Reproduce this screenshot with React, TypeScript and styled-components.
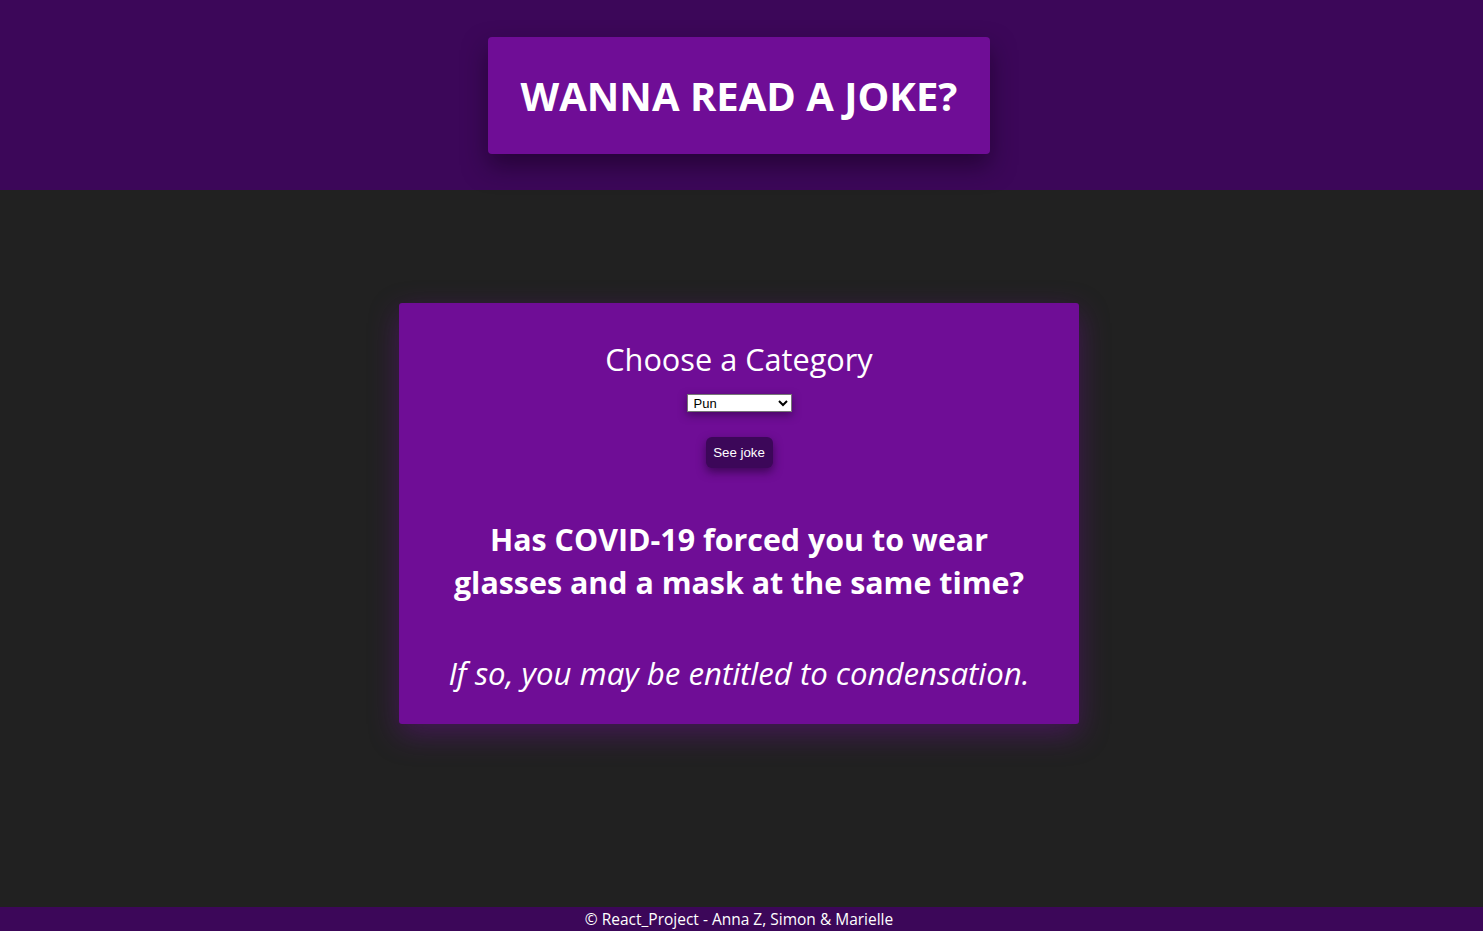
import styled, { createGlobalStyle } from "styled-components";

const GlobalStyle = createGlobalStyle`
  html, body {
    margin: 0;
    padding: 0;
    background: #212121;
    font-family: "Open Sans", "Noto Sans", sans-serif;
    color: #ffffff;
  }
`;

const Page = styled.div`
  display: flex;
  flex-direction: column;
  min-height: 931px;
`;

const Header = styled.header`
  background: #3c0759;
  height: 190px;
  display: flex;
  justify-content: center;
  align-items: flex-start;
  padding: 37px 5px 0 0;
  box-sizing: border-box;
`;

const TitleBox = styled.div`
  background: #6f0d96;
  width: 502px;
  height: 117px;
  border-radius: 4px;
  display: flex;
  align-items: center;
  justify-content: center;
  box-shadow: 0 12px 24px rgba(20, 0, 30, 0.55);
`;

const Title = styled.h1`
  margin: 0;
  font-size: 40px;
  font-weight: 700;
`;

const Main = styled.main`
  flex: 1;
  display: flex;
  justify-content: center;
  align-items: flex-start;
  padding: 113px 5px 0 0;
`;

const Card = styled.section`
  background: #6f0d96;
  width: 680px;
  height: 421px;
  box-sizing: border-box;
  border-radius: 3px;
  display: flex;
  flex-direction: column;
  align-items: center;
  padding-top: 36px;
  box-shadow: 0 10px 30px rgba(111, 13, 150, 0.45);
`;

const Heading = styled.h2`
  margin: 0;
  font-size: 30.7px;
  font-weight: 400;
  line-height: 40px;
`;

const Select = styled.select`
  margin-top: 15px;
  width: 105px;
  height: 18px;
  font-family: "Liberation Sans", Arial, sans-serif;
  font-size: 13px;
  padding: 0 2px;
  border: 1px solid #767676;
  border-radius: 0;
  background: #ffffff;
  color: #000000;
  box-shadow: 0 3px 8px rgba(30, 0, 45, 0.5);
`;

const Button = styled.button`
  margin-top: 25px;
  width: 67px;
  height: 31px;
  border: none;
  border-radius: 6px;
  background: #3c0759;
  color: #ffffff;
  font-family: "Liberation Sans", Arial, sans-serif;
  font-size: 13.3px;
  box-shadow: 0 4px 10px rgba(30, 0, 45, 0.6);
  cursor: pointer;
`;

const Question = styled.p`
  margin: 50px 0 0;
  font-size: 30.4px;
  font-weight: 700;
  line-height: 43px;
  text-align: center;
  max-width: 600px;
`;

const Answer = styled.p`
  margin: 48px 0 0;
  font-size: 31.2px;
  font-style: italic;
  text-align: center;
`;

const Footer = styled.footer`
  background: #3c0759;
  height: 24px;
  display: flex;
  align-items: center;
  justify-content: center;
  padding-right: 5px;
  font-size: 15.5px;
`;

export default function App() {
  return (
    <Page>
      <GlobalStyle />
      <Header>
        <TitleBox>
          <Title>WANNA READ A JOKE?</Title>
        </TitleBox>
      </Header>
      <Main>
        <Card>
          <Heading>Choose a Category</Heading>
          <Select defaultValue="Pun">
            <option>Any</option>
            <option>Programming</option>
            <option>Misc</option>
            <option>Pun</option>
          </Select>
          <Button>See joke</Button>
          <Question>
            Has COVID-19 forced you to wear glasses and a mask at the same time?
          </Question>
          <Answer>If so, you may be entitled to condensation.</Answer>
        </Card>
      </Main>
      <Footer>© React_Project - Anna Z, Simon &amp; Marielle</Footer>
    </Page>
  );
}
